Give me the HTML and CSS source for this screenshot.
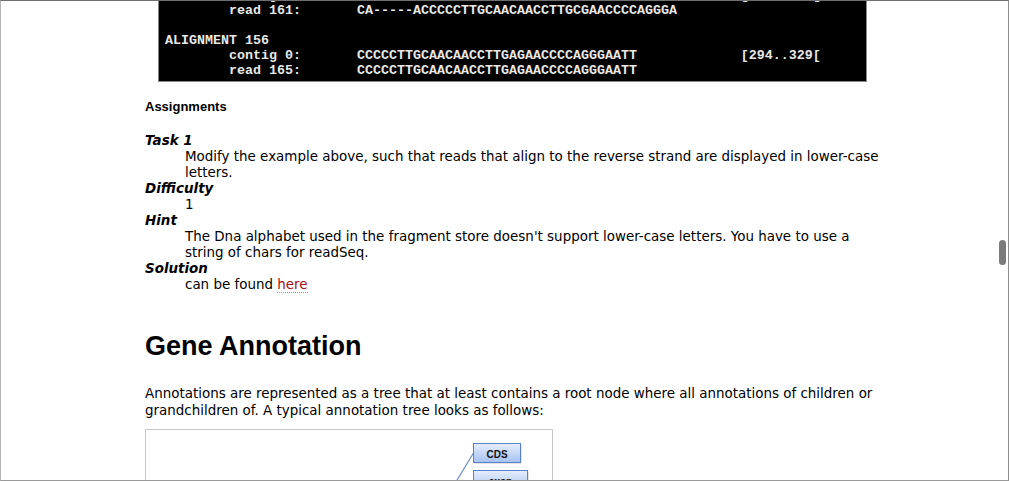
FILE: index.html
```html
<!DOCTYPE html>
<html>
<head>
<meta charset="utf-8">
<title>Fragment Store Tutorial</title>
<link rel="stylesheet" href="styles.css">
</head>
<body>
<div class="window">
  <div class="page">
<pre class="code">        contig 0:       CACCCCCTTGCAACAACCTTGCGAACCCCAGGGAGGTTT         [258..294[
        read 161:       CA-----ACCCCCTTGCAACAACCTTGCGAACCCCAGGGA

ALIGNMENT 156
        contig 0:       CCCCCTTGCAACAACCTTGAGAACCCCAGGGAATT             [294..329[
        read 165:       CCCCCTTGCAACAACCTTGAGAACCCCAGGGAATT</pre>
    <div class="subhead">Assignments</div>
    <dl class="tasks">
      <dt>Task 1</dt>
      <dd>Modify the example above, such that reads that align to the reverse strand are displayed in lower-case letters.</dd>
      <dt>Difficulty</dt>
      <dd>1</dd>
      <dt>Hint</dt>
      <dd>The Dna alphabet used in the fragment store doesn't support lower-case letters. You have to use a string of chars for readSeq.</dd>
      <dt>Solution</dt>
      <dd>can be found <a class="link" href="#">here</a></dd>
    </dl>
    <h2 class="title">Gene Annotation</h2>
    <p class="text">Annotations are represented as a tree that at least contains a root node where all annotations of children or grandchildren of. A typical annotation tree looks as follows:</p>
    <div class="figure">
      <svg class="tree" width="406" height="120" viewBox="0 0 406 120" xmlns="http://www.w3.org/2000/svg">
        <defs>
          <linearGradient id="boxfill" x1="0" y1="0" x2="0" y2="1">
            <stop offset="0" stop-color="#e6eefc"/>
            <stop offset="1" stop-color="#a6c2f1"/>
          </linearGradient>
        </defs>
        <line x1="327.5" y1="23" x2="305" y2="60" stroke="#6c8fc6" stroke-width="1.2"/>
        <rect x="328.5" y="14.5" width="47" height="19" fill="#c9c9c9"/>
        <rect x="327.5" y="13.5" width="47" height="19" fill="url(#boxfill)" stroke="#5a82c6"/>
        <text x="351" y="27.5" text-anchor="middle" class="node-label">CDS</text>
        <rect x="328.5" y="41.5" width="54" height="20" fill="#c9c9c9"/>
        <rect x="327.5" y="40.5" width="54" height="20" fill="url(#boxfill)" stroke="#5a82c6"/>
        <text x="354.5" y="55" text-anchor="middle" class="node-label">exon</text>
      </svg>
    </div>
  </div>
  <div class="thumb"></div>
</div>
</body>
</html>
```

FILE: styles.css
```css
html, body {
  margin: 0;
  padding: 0;
  background: #ffffff;
}

.window {
  position: relative;
  width: 1009px;
  height: 481px;
  box-sizing: border-box;
  border: 1px solid #9a9a9a;
  border-top-color: #6e6e6e;
  border-left-color: #b4b4b4;
  border-right-color: #8c8c8c;
  overflow: hidden;
  background: #ffffff;
}

.page {
  margin-top: -14px;
  padding-left: 144px;
  width: 742px;
  color: #000000;
  font-family: "DejaVu Sans", Verdana, sans-serif;
  font-size: 13.45px;
  line-height: 16px;
}

.code {
  margin: 0 0 0 13px;
  width: 694px;
  padding: 0 7px 3px 6px;
  background: #000000;
  border: 1px solid #8a8a8a;
  color: #e8e8e8;
  font-family: "Liberation Mono", "Courier New", monospace;
  font-weight: bold;
  font-size: 13.33px;
  line-height: 15px;
  overflow: hidden;
  white-space: pre;
}

.subhead {
  margin-top: 17px;
  font-family: "Liberation Sans", Arial, sans-serif;
  font-weight: bold;
  font-size: 13px;
  line-height: 16px;
}

.tasks {
  margin: 18px 0 0 0;
}

.tasks dt {
  font-weight: bold;
  font-style: italic;
  font-size: 13.45px;
  line-height: 16px;
}

.tasks dd {
  margin: 0 0 0 40px;
  line-height: 16px;
}

.link {
  color: #a0101a;
  text-decoration: none;
  border-bottom: 1px dotted #9a9a9a;
}

.title {
  margin: 37px 0 0 0;
  font-family: "Liberation Sans", Arial, sans-serif;
  font-weight: bold;
  font-size: 27px;
  line-height: 32px;
}

.text {
  margin: 23px 0 0 0;
  line-height: 17px;
}

.figure {
  margin-top: 10px;
  width: 406px;
  height: 120px;
  border: 1px solid #c8c8c8;
}

.tree {
  display: block;
}

.node-label {
  font-family: "Liberation Sans", Arial, sans-serif;
  font-weight: bold;
  font-size: 10px;
  fill: #111111;
}

.thumb {
  position: absolute;
  left: 998px;
  top: 239px;
  width: 7px;
  height: 25px;
  border-radius: 4px;
  background: #7b7b7b;
}
```
